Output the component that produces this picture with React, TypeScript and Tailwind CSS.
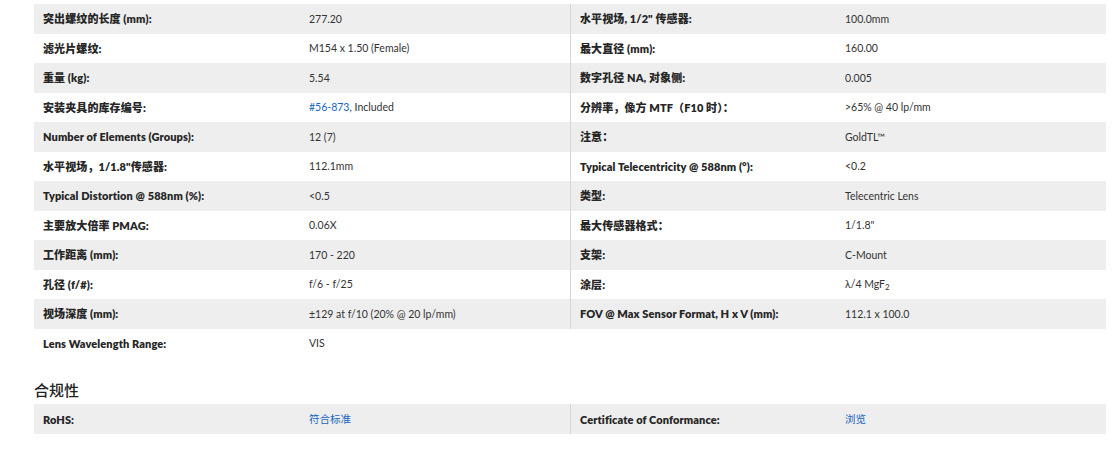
import React from "react";

type Cell = { label: string; value: React.ReactNode } | null;

const link = "text-[#1565c0]";

const rows: [Cell, Cell][] = [
  [
    { label: "突出螺纹的长度 (mm):", value: "277.20" },
    { label: "水平视场, 1/2\" 传感器:", value: "100.0mm" },
  ],
  [
    { label: "滤光片螺纹:", value: "M154 x 1.50 (Female)" },
    { label: "最大直径 (mm):", value: "160.00" },
  ],
  [
    { label: "重量 (kg):", value: "5.54" },
    { label: "数字孔径 NA, 对象侧:", value: "0.005" },
  ],
  [
    {
      label: "安装夹具的库存编号:",
      value: (
        <>
          <span className={link}>#56-873</span>, Included
        </>
      ),
    },
    { label: "分辨率，像方 MTF（F10 时）：", value: ">65% @ 40 lp/mm" },
  ],
  [
    { label: "Number of Elements (Groups):", value: "12 (7)" },
    { label: "注意：", value: "GoldTL™" },
  ],
  [
    { label: "水平视场，1/1.8\"传感器:", value: "112.1mm" },
    { label: "Typical Telecentricity @ 588nm (°):", value: "<0.2" },
  ],
  [
    { label: "Typical Distortion @ 588nm (%):", value: "<0.5" },
    { label: "类型:", value: "Telecentric Lens" },
  ],
  [
    { label: "主要放大倍率 PMAG:", value: "0.06X" },
    { label: "最大传感器格式：", value: "1/1.8\"" },
  ],
  [
    { label: "工作距离 (mm):", value: "170 - 220" },
    { label: "支架:", value: "C-Mount" },
  ],
  [
    { label: "孔径 (f/#):", value: "f/6 - f/25" },
    {
      label: "涂层:",
      value: (
        <>
          λ/4 MgF<sub className="text-[8px] align-baseline relative top-[2px]">2</sub>
        </>
      ),
    },
  ],
  [
    { label: "视场深度 (mm):", value: "±129 at f/10 (20% @ 20 lp/mm)" },
    { label: "FOV @ Max Sensor Format, H x V (mm):", value: "112.1 x 100.0" },
  ],
  [{ label: "Lens Wavelength Range:", value: "VIS" }, null],
];

const compliance: [Cell, Cell][] = [
  [
    { label: "RoHS:", value: <span className={link}>符合标准</span> },
    { label: "Certificate of Conformance:", value: <span className={link}>浏览</span> },
  ],
];

function Row({ row, gray, h }: { row: [Cell, Cell]; gray: boolean; h?: string }) {
  const [l, r] = row;
  return (
    <div
      className={`grid grid-cols-[268px_268px_268px_268px] ${h ?? "h-[29.5px]"} items-center ${
        gray ? "bg-[#eeeeee]" : "bg-white"
      }`}
    >
      <div className="pl-[9px] font-extrabold text-[#262626] whitespace-nowrap tracking-[0.1px]">
        {l?.label}
      </div>
      <div className="pl-[7px] text-[10.5px] text-[#333333] whitespace-nowrap">{l?.value}</div>
      <div
        className={`h-full flex items-center pl-[9px] font-extrabold text-[#262626] whitespace-nowrap tracking-[0.1px] ${
          r ? "border-l border-[#d6d6d6]" : ""
        }`}
      >
        {r?.label}
      </div>
      <div className="pl-[7px] text-[10.5px] text-[#333333] whitespace-nowrap">{r?.value}</div>
    </div>
  );
}

export default function App() {
  return (
    <div
      className="bg-white w-[1118px] h-[458px] pt-[4px] pl-[34px] text-[11px] leading-none"
      style={{ fontFamily: "Lato, 'Noto Sans CJK SC', sans-serif" }}
    >
      <div className="w-[1072px]">
        {rows.map((row, i) => (
          <Row key={i} row={row} gray={i % 2 === 0} />
        ))}
      </div>
      <div className="mt-[24px] text-[15px] font-medium text-[#222222] leading-[16px]">合规性</div>
      <div className="w-[1072px] mt-[6px]">
        {compliance.map((row, i) => (
          <Row key={i} row={row} gray={true} h="h-[30px]" />
        ))}
      </div>
    </div>
  );
}
